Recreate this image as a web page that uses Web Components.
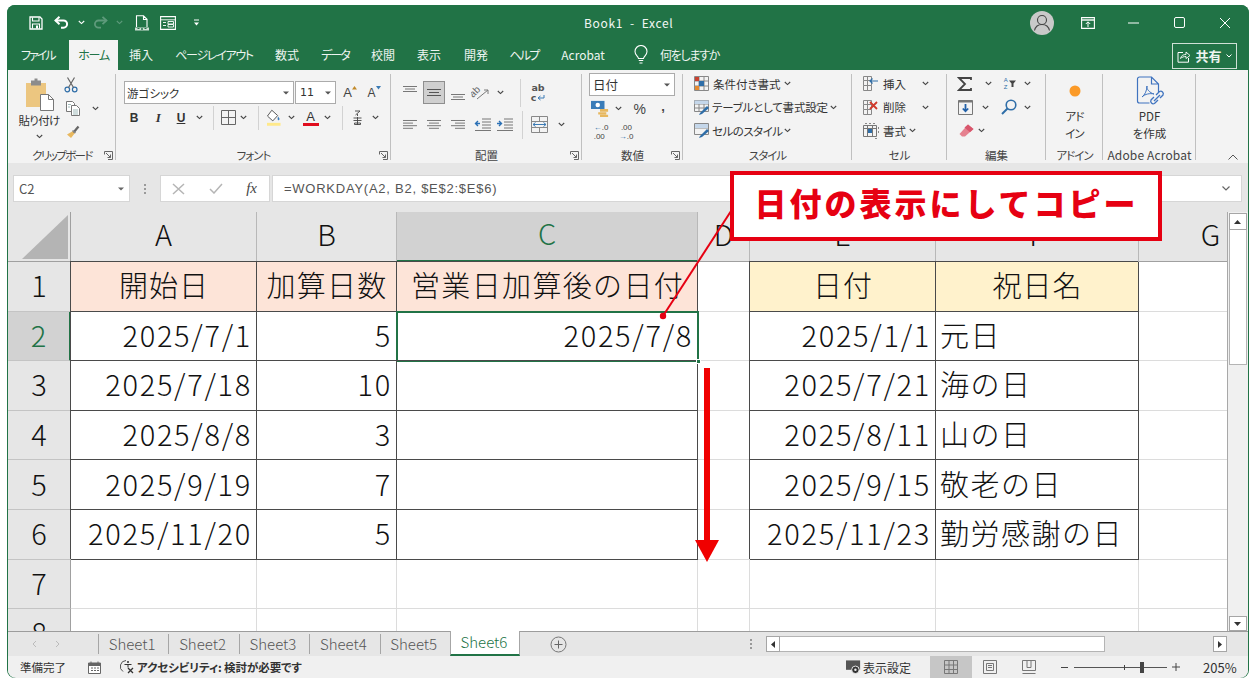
<!DOCTYPE html>
<html lang="ja"><head><meta charset="utf-8"><title>Book1 - Excel</title>
<style>
html,body{margin:0;padding:0;background:#fff;width:1258px;height:687px;overflow:hidden}
</style></head><body>
<x-app></x-app>
<script>
const UI='"Noto Sans CJK JP","Noto Sans",sans-serif';
const svg=(w,h,b,extra='')=>`<svg width="${w}" height="${h}" viewBox="0 0 ${w} ${h}" fill="none" ${extra}>${b}</svg>`;
const chev=(c='#444')=>svg(7,5,`<path d="M.8 1l2.7 2.6L6.2 1" stroke="${c}" stroke-width="1.1"/>`);
const drop=(c='#555')=>svg(6,4,`<path d="M0 .5h6L3 3.5z" fill="${c}"/>`);
const lineset=(ws,c='#666',y0=1,step=3)=>svg(16,y0*2+(ws.length-1)*step+1,ws.map((p,i)=>`<path d="M${p[0]} ${y0+i*step+.5}h${p[1]}" stroke="${c}"/>`).join(''));
const I={
 save:svg(14,14,`<path d="M1 1h10l2 2v10H1z" stroke="#fff" stroke-width="1.3"/><path d="M3.500 1.500v3.500h6.500V1.500M3.500 12.500V8h7v4.500" stroke="#fff" stroke-width="1.1"/><path d="M7 9.500h2v3H7z" fill="#fff"/>`),
 undo:svg(15,13,`<path d="M1.5 4.5h8a3.6 3.6 0 010 7.2H7" stroke="#fff" stroke-width="2"/><path d="M5.5.8L1.5 4.5l4 3.7" stroke="#fff" stroke-width="2"/>`),
 redo:svg(15,13,`<path d="M13.5 4.5h-8a3.6 3.6 0 000 7.2H8" stroke="#5e9a7b" stroke-width="1.8"/><path d="M9.5.8l4 3.7-4 3.7" stroke="#5e9a7b" stroke-width="1.8"/>`),
 prev:svg(14,16,`<path d="M1.5 12V.8h7l3.5 3.5V12M8.500 1v3.500H12" stroke="#fff" stroke-width="1.1"/><path d="M0 12.500h14v3H0z" fill="#cfe0d6"/><circle cx="7" cy="14" r="1" fill="#217346"/><path d="M2.500 13.500h2M9.500 13.500h2" stroke="#217346"/>`),
 form:svg(16,14,`<path d="M.6.6h14.800v12.800H.6z" stroke="#fff" stroke-width="1.1"/><path d="M.6 3.800h14.800M3 6.500h3M3 9.500h3M8 5.500h5.500v2.500H8zM8 8.500h5.500V11H8z" stroke="#fff" stroke-width=".9"/>`),
 qat:svg(7,7,`<path d="M1 1h5" stroke="#fff"/><path d="M1 3.500h5L3.500 6.500z" fill="#fff"/>`),
 bulb:svg(14,20,`<path d="M4.500 13.500C4 11 1 10 1 6.500a6 6 0 0112 0c0 3.500-3 4.500-3.500 7z" stroke="#fff" stroke-width="1.1"/><path d="M4.800 15.500h4.400M5.500 18h3" stroke="#fff" stroke-width="1.2"/>`),
 share:svg(14,13,`<path d="M6 2.500H1v9.700h10.500V8" stroke="#fff"/><path d="M3.500 8.500C4 5.500 6.500 4.500 9 4.500V2l4 3.500L9 8.500V6.500C7 6.500 5 7 3.500 8.500z" stroke="#fff" stroke-width=".9"/>`),
 acct:svg(24,24,`<circle cx="12" cy="12" r="12" fill="#c9c9c9"/><circle cx="12" cy="9" r="4.500" stroke="#444" stroke-width="1.100"/><path d="M4.500 19.500c1-4.500 4-6 7.500-6s6.500 1.500 7.500 6" stroke="#444" stroke-width="1.100"/>`),
 ropt:svg(14,12,`<path d="M.6.6h12.800v10.800H.6z" stroke="#fff" stroke-width="1.100"/><path d="M.6 3h12.800" stroke="#fff" stroke-width="1.400"/><path d="M7 10V5M4.800 7L7 4.800 9.200 7" stroke="#fff"/>`),
 min:svg(12,2,`<path d="M0 1h11" stroke="#fff"/>`),
 max:svg(11,11,`<rect x=".5" y=".5" width="10" height="10" rx="1.500" stroke="#fff"/>`),
 close:svg(12,12,`<path d="M1 1l10 10M11 1L1 11" stroke="#fff" stroke-width="1"/>`),
 paste:svg(29,33,`<path d="M1 5h20v24H1z" fill="#ecc680"/><path d="M6 2.500h10v5H6z" fill="#8c8c8c"/><path d="M9.500 .5h3v3h-3z" fill="#8c8c8c"/><path d="M15.500 16.500h8l5 5v11h-13z" fill="#fff" stroke="#777"/><path d="M23.500 16.500v5h5" stroke="#777"/>`),
 scis:svg(14,16,`<circle cx="3.300" cy="12.500" r="2.300" stroke="#2f6ea8" stroke-width="1.200"/><circle cx="10.700" cy="12.500" r="2.300" stroke="#2f6ea8" stroke-width="1.200"/><path d="M4.500 10.500L10.500.5M9.500 10.500L3.500.5" stroke="#666" stroke-width="1.200"/>`),
 copy:svg(14,15,`<path d="M.5.500h6l2 2v8h-8z" fill="#fff" stroke="#777"/><path d="M5.500 4.500h5l3 3v7h-8z" fill="#fff" stroke="#777"/><path d="M2 3.500h3M2 6h2M7 9h5M7 11h5M7 13h5" stroke="#8aa" stroke-width=".8"/>`),
 brush:svg(15,13,`<path d="M8 6L2 9.500 6 13l4-5z" fill="#e8b85f"/><path d="M8.500 7.500l5-6" stroke="#666" stroke-width="2.200"/><path d="M7.500 5.500l3 2.500" stroke="#888" stroke-width="1.500"/>`),
 border:svg(15,15,`<path d="M.5.500h14v14H.5zM7.500.5v14M.5 7.500h14" stroke="#666"/>`),
 fill:svg(17,17,`<path d="M6 1L1.500 7l5.500 5 5-5.500z" fill="#fff" stroke="#555"/><path d="M12.500 7.500c1.300 1.800 2 2.800 1 3.600s-2.300-.6-1-3.600z" fill="#3c7cb8"/><path d="M1 14h14v3H1z" fill="#ffe98a"/>`),
 phon:svg(11,16,`<path d="M3 1h5L3.500 5M5.500 4v2" stroke="#444" stroke-width=".9"/><path d="M1.500 8h8M1.500 10.500h8M5.500 7v8M2.500 13h6v1.500h-6z" stroke="#444" stroke-width=".9"/>`),
 launch:svg(9,9,`<path d="M.5 3.500V.5h8v8H4" stroke="#666"/><path d="M2 2l4.500 4.500M3.500 6.500h3v-3" stroke="#666"/>`),
 orient:svg(19,15,`<text x="2" y="13" transform="rotate(-45 2 13)" font-family="Liberation Sans" font-size="10" fill="#666">ab</text><path d="M6 14l11-9M17 9V5h-4" stroke="#7a7a7a" stroke-width="1"/>`),
 wrap:`<span class="wrap"><span>ab</span><span class="w2">c<svg width="8" height="6" viewBox="0 0 8 6" fill="none"><path d="M7 0v3H1.500M3.500 1L1 3l2.500 2" stroke="#3a7ab5"/></svg></span></span>`,
 indL:svg(17,13,`<path d="M8 1h9M8 4h9M8 7h9M8 10h9M1 12.500h16" stroke="#777"/><path d="M6 5.500H2M4 3L1.500 5.500 4 8" stroke="#2a70b5" stroke-width="1.400"/>`),
 indR:svg(17,13,`<path d="M8 1h9M8 4h9M8 7h9M8 10h9M1 12.500h16" stroke="#777"/><path d="M1 5.500h4M3 3l2.500 2.500L3 8" stroke="#2a70b5" stroke-width="1.400"/>`),
 merge:svg(17,17,`<path d="M.5.500h16v16H.5zM.5 5.500h16M.5 11.500h16M8.500.5v5M8.500 11.500v5" stroke="#888"/><path d="M2 8.500h13M4.500 6.500l-2.500 2 2.500 2M12.500 6.500l2.500 2-2.500 2" stroke="#3a7ab5" stroke-width="1"/>`),
 curr:svg(20,18,`<path d="M0 0h15v9H0z" fill="#3a7cb8"/><circle cx="7.500" cy="4.500" r="2.500" fill="#fff"/><path d="M10 9h9v3h-9zM8 12.500h9v2.500H8zM10 15.500h9V18h-9z" fill="#e8b85f"/>`),
 dec1:`<span class="dec"><span><b>←</b>.0</span><span>.00</span></span>`,
 dec2:`<span class="dec"><span>&nbsp;.00</span><span><b>→</b>.0</span></span>`,
 cond:svg(15,15,`<path d="M.5.500h14v14H.5zM5 .5v14M10 .5v14M.5 5h14M.5 10h14" stroke="#888"/><path d="M1 1h4v4H1z" fill="#c8412f"/><path d="M5 5h5v5H5z" fill="#2f6ea8"/><path d="M1 10h4v4H1z" fill="#e58a2e"/>`),
 tbl:svg(16,15,`<path d="M.5.500h14v11H.5zM.5 4h14M.5 8h14M5 .5v11M10 .5v11" stroke="#888"/><path d="M.5.500h14V4H.5z" fill="#c5d7ea"/><path d="M6 13l7-7 2 2-7 6-3 1z" fill="#2f6ea8"/>`),
 cstyle:svg(16,15,`<path d="M.5.500h14v11H.5zM.5 5h14" stroke="#888"/><path d="M1 1h13v4H1z" fill="#c5d7ea"/><path d="M6 13l7-7 2 2-7 6-3 1z" fill="#2f6ea8"/>`),
 cins:svg(15,15,`<path d="M.5.500h8v4h-8zM.5 4.500v5h8v-5M.5 9.500v5h8v-5M4.500 .5v14" stroke="#888"/><path d="M15 5H7M9.500 2.500L7 5l2.500 2.500" stroke="#2f6ea8" stroke-width="1.200"/>`),
 cdel:svg(15,15,`<path d="M.5.500h8v4h-8zM.5 4.500v5h8v-5M.5 9.500v5h8v-5M4.500 .5v14" stroke="#888"/><path d="M7 2l7 7M14 2L7 9" stroke="#d0392b" stroke-width="1.800"/>`),
 cfmt:svg(16,16,`<path d="M.5 2.500h13v11H.5zM.5 5.500h13M4.500 2.500v11M9.500 2.500v11" stroke="#777"/><path d="M5 6h4v4H5z" fill="#2f6ea8"/><path d="M2 .5h2M6 .5h2M10 .5h2M15.500 4v2M15.500 8v2M12 15.500h2" stroke="#888"/>`),
 sum:svg(16,14,`<path d="M14 3V1H2l6 6-6 6h12v-2" stroke="#444" stroke-width="1.800"/>`),
 fillb:svg(15,15,`<path d="M.5.500h14v14H.5z" stroke="#777"/><path d="M.5.500h14v2H.5z" fill="#777"/><path d="M7.500 4v7M4.800 8.500l2.700 2.800 2.700-2.800" stroke="#2160a8" stroke-width="1.800"/>`),
 find:svg(16,16,`<circle cx="10" cy="6" r="4.800" stroke="#2f6ea8" stroke-width="1.600"/><path d="M6.500 9.500L1 15" stroke="#2f6ea8" stroke-width="2"/>`),
 erase:svg(15,13,`<path d="M9 .5l5.500 4.500L6 12.500H3L.5 10z" fill="#e5818f"/><path d="M9 .5l5.500 4.500-3.500 3.200L5.500 3.500z" fill="#d8566c"/>`),
 dot:svg(12,12,`<circle cx="6" cy="6" r="5.500" fill="#fb9a28"/>`),
 pdf:svg(30,32,`<path d="M2.500 3a2 2 0 012-2h12l7 7v8M16.500 1v7h7M2.500 3v22a2 2 0 002 2h10" stroke="#3f73bf" stroke-width="1.200"/><path d="M7 21c3-2 5-7 5-11-1 3 3 7 7 8-4-1-9 0-12 3z" stroke="#3f73bf" stroke-width="1"/><path d="M21 19l3.500-3.500a2.600 2.600 0 013.500 3.500L25 22M23 24l-3.500 3.500a2.600 2.600 0 01-3.500-3.500l3-3M19 25l6-6" stroke="#3f73bf" stroke-width="1.300"/>`),
 collapse:svg(10,6,`<path d="M.5 5.500L5 1l4.500 4.500" stroke="#555"/>`),
};
function row(left,items,cls=''){
  const c=items.map(i=>i[0]);const b=[];
  for(let i=0;i<c.length-1;i++)b.push((c[i]+c[i+1])/2);
  const st=c[0]-(b[0]-c[0]);const en=c[c.length-1]+(c[c.length-1]-b[b.length-1]);
  const edges=[st,...b,en];
  return `<div class="row ${cls}" style="padding-left:${st-left}px">`+items.map((it,i)=>`<span class="c" style="width:${edges[i+1]-edges[i]}px">${it[1]}</span>`).join('')+`</div>`;
}
function base(el,html){el.attachShadow({mode:'open'}).innerHTML=html;}

class XRGroup extends HTMLElement{
 connectedCallback(){ if(this.shadowRoot)return;
  const w=this.getAttribute('w'),lab=this.getAttribute('label'),l=this.hasAttribute('launch'),pr=this.getAttribute('lpad')||'3',ls=this.getAttribute('ls')||'0',fs=this.getAttribute('fs')||'11.5';
  base(this,`<style>
  :host{display:flex;flex-direction:column;box-sizing:border-box;width:${w}px;height:93px;position:relative}
  .body{height:78px;box-sizing:border-box;flex:none}
  .lab{flex:1;display:grid;grid-template-columns:1fr auto 1fr;align-items:center;font-size:${fs}px;color:#444;line-height:14px;padding-bottom:1px;white-space:nowrap}
  .lab b{font-weight:400;grid-column:2;letter-spacing:${ls}px}
  .lab i{grid-column:3;justify-self:end;padding-right:${pr}px;display:flex}
  .sep{position:absolute;right:0;top:4px;height:86px;width:1px;background:#c0c0c0}
  </style><div class="body"><slot></slot></div><div class="lab"><b>${lab}</b>${l?`<i>${I.launch}</i>`:''}</div><div class="sep"></div>`);
 }
}
customElements.define('x-rgroup',XRGroup);

class XTitlebar extends HTMLElement{
 connectedCallback(){base(this,`<style>
  :host{display:block;height:35px;background:#217346;color:#fff;border-radius:8px 8px 0 0}
  .bar{display:flex;align-items:center;height:35px;position:relative}
  .c{display:flex;justify-content:center;align-items:center;flex:none;height:24px}
  .row{display:flex;align-items:center}
  .title{position:absolute;left:577px;top:11px;font:12px/14px ${UI};letter-spacing:.7px;white-space:pre;color:#f2f7f4}
  .right{margin-left:auto;display:flex;align-items:center;padding-right:18px}
  .right span{flex:none;display:flex;justify-content:center;align-items:center}
  </style><div class="bar">
  ${row(7,[[36,I.save],[65,I.undo],[80,chev('#fff')],[102,I.redo],[118,chev('#5e9a7b')],[141,I.prev],[168,I.form],[196,I.qat]])}
  <div class="title">Book1  -  Excel</div>
  <div class="right"><span style="width:24px;margin-right:26px">${I.acct}</span><span style="width:16px;margin-right:32px">${I.ropt}</span><span style="width:12px;margin-right:33px">${I.min}</span><span style="width:12px;margin-right:34px">${I.max}</span><span style="width:12px">${I.close}</span></div>
  </div>`);}
}
customElements.define('x-titlebar',XTitlebar);

class XTabstrip extends HTMLElement{
 connectedCallback(){
  const tabs=[['ファイル',13,33,0,-2],['ホーム',16,49,1,-1.2],['挿入',11,24],['ページレイアウト',22,78,0,-1.3],['数式',22,24],['データ',22,28,0,-2],['校閲',22,24],['表示',22,24],['開発',23,24],['ヘルプ',21,30,0,-1.7],['Acrobat',21,46]];
  base(this,`<style>
  :host{display:flex;height:30px;background:#217346;font:12px/30px ${UI};font-feature-settings:"palt";color:#eef5f1;align-items:stretch}
  span{flex:none;white-space:nowrap;text-align:center}
  .on{background:#f3f3f3;color:#217346}
  .bulb{margin-left:27px;width:16px;display:flex;align-items:center;justify-content:center}
  .tell{margin-left:11px;letter-spacing:-1.300px}
  .share{margin-left:auto;margin-right:11px;margin-top:3px;height:24px;width:63px;border:1px solid #cfe0d6;display:flex;align-items:center;justify-content:center;gap:4px;line-height:22px;font-size:13px;font-weight:700;box-sizing:content-box}
  .share svg{flex:none}
  </style>`+tabs.map(t=>`<span class="${t[3]?'on':''}" style="margin-left:${t[1]-(t[3]?1:0)}px;width:${t[2]}px;letter-spacing:${t[4]||0}px">${t[0]}</span>`).join('')+
  `<span class="bulb">${I.bulb}</span><span class="tell">何をしますか</span><span class="share">${I.share}<span>共有</span>${svg(6,4,'<path d="M.5.5L3 3l2.500-2.500" stroke="#fff"/>')}</span>`);
 }
}
customElements.define('x-tabstrip',XTabstrip);

const caret=(c,up)=>svg(5,4,up?`<path d="M2.500 0L5 3.500H0z" fill="${c}"/>`:`<path d="M0 0h5L2.500 3.500z" fill="${c}"/>`);
class XRibbon extends HTMLElement{
 connectedCallback(){
  const tl=(icon,txt,ch,gap=3,ls=0)=>`<div class="tl"><span class="ic">${icon}</span><span style="margin-left:${gap}px;letter-spacing:${ls}px">${txt}</span>${ch?`<span class="ch" style="margin-left:${ch}px">${chev()}</span>`:''}</div>`;
  base(this,`<style>
  :host{display:flex;height:93px;background:#f3f3f3;font:11.500px/14px ${UI};font-feature-settings:"palt";color:#333;border-bottom:0}
  .row{display:flex;align-items:center;height:23.500px;box-sizing:border-box}
  .c{flex:none;display:flex;align-items:center;justify-content:center;white-space:nowrap;height:100%}
  .two{padding-top:10px}
  .two .row{height:25px}
  .two .row+.row{margin-top:7px}
  .sel{height:23px;box-sizing:border-box;background:#fff;border:1px solid #ababab;display:flex;align-items:center;justify-content:space-between;padding:0 4px 0 2px;font-size:11.500px}
  .clip{display:flex;height:78px}
  .pbtn{width:46px;margin-left:8px;display:flex;flex-direction:column;align-items:center;padding-top:8px;box-sizing:border-box}
  .pbtn .t{font-size:11.500px;line-height:14px;margin-top:2px;white-space:nowrap;letter-spacing:-.7px}
  .pbtn .d{margin-top:7px;display:flex}
  .cstack{display:flex;flex-direction:column;padding-top:3px;width:40px}
  .cstack div{display:flex;align-items:center;height:23.500px;padding-left:2px}
  .aa{font:13px/14px "Liberation Sans",sans-serif;color:#444;display:inline-flex;justify-content:center;align-items:flex-start;width:20px}
  .fb{font:700 12px/14px "Liberation Sans",sans-serif;color:#333}
  .wrap{font:700 9.500px/10px "DejaVu Sans",sans-serif;color:#555;text-align:center;display:inline-flex;flex-direction:column;height:20px}
  .w2{display:flex;align-items:center;gap:1px}
  .dec{font:8px/9px "Liberation Sans",sans-serif;color:#444;display:inline-flex;flex-direction:column;white-space:pre}
  .dec b{color:#2f6ea8;font-weight:700}
  .act{width:22px;height:23px;background:#cfcfcf;border:1px solid #8e8e8e;box-sizing:border-box;display:flex;align-items:center;justify-content:center}
  .vs{width:1px;height:24px;background:#d2d2d2;display:block}
  .tl{display:flex;align-items:center;height:23.500px;white-space:nowrap}
  .tl .ic{width:17px;display:flex;justify-content:center;flex:none}
  .ch{display:flex}
  .big{display:flex;flex-direction:column;align-items:center;text-align:center;font-size:11.500px;line-height:17px}
  .big .ic{display:flex;align-items:center;justify-content:center}
  .fill{flex:1;position:relative;display:flex;justify-content:flex-end;align-items:flex-end;padding:0 10px 3px 0}
  .pct{font:14px "Liberation Sans",sans-serif;color:#444}
  .cm{font:700 13px "Liberation Sans",sans-serif;color:#444;line-height:10px;padding-bottom:4px}
  .up{display:flex;margin-top:-8px}.dn{display:flex;margin-top:8px}
  </style>
  <x-rgroup w="108" label="クリップボード" launch ls="-1.600"><div class="clip">
    <div class="pbtn">${I.paste}<span class="t">貼り付け</span><span class="d">${chev()}</span></div>
    <div class="cstack"><div>${I.scis}</div><div style="padding-left:4px">${I.copy}<span style="margin-left:12px;display:flex">${chev()}</span></div><div style="padding-left:3px">${I.brush}</div></div>
  </div></x-rgroup>
  <x-rgroup w="275" label="フォント" launch ls="-1"><div class="two">
    <div style="display:flex;height:25px;align-items:center;padding-left:8px">
      <div class="sel" style="width:170px"><span>游ゴシック</span>${drop()}</div>
      <div class="sel" style="width:41px;margin-left:1px;padding-left:4px"><span style="font-family:'DejaVu Sans';font-size:11px">11</span>${drop()}</div>
      <span class="aa" style="margin-left:4px">A${caret('#c28a2a',true)}</span><span class="aa" style="margin-left:4px;font-size:12px">A${caret('#3a7ab5',false)}</span>
    </div>
    ${row(116,[[134,'<span class="fb">B</span>'],[158,'<span class="fb" style="font-style:italic;font-family:Liberation Serif;font-size:13px">I</span>'],[183,'<span class="fb" style="text-decoration:underline">U</span>'],[200,chev()],[213,'<i class="vs"></i>'],[227,I.border],[245,chev()],[258,'<i class="vs"></i>'],[273,I.fill],[291,chev()],[311,'<span style="display:inline-block;font:13px/13px Liberation Sans;border-bottom:3px solid #e00d1e;padding:0 1px;width:14px;text-align:center;color:#333">A</span>'],[329,chev()],[342,'<i class="vs"></i>'],[357,I.phon],[375,chev()]])}
  </div></x-rgroup>
  <x-rgroup w="191" label="配置" launch><div class="two">
    ${row(391,[[410,`<span class="up">${lineset([[1,14],[3,10],[1,14]],'#777',1,2.500)}</span>`],[434,`<span class="act">${lineset([[1,14],[3,10],[1,14]],'#555',1,3)}</span>`],[458,`<span class="dn">${lineset([[1,14],[3,10],[1,14]],'#777',1,2.500)}</span>`],[483,I.orient],[498,chev()],[522,'<i class="vs" style="height:28px"></i>'],[538,I.wrap]])}
    ${row(391,[[410,lineset([[1,14],[1,10],[1,14],[1,10]],'#777',1,2.600)],[434,lineset([[1,14],[3,10],[1,14],[3,10]],'#777',1,2.600)],[458,lineset([[1,14],[5,10],[1,14],[5,10]],'#777',1,2.600)],[483,I.indL],[507,I.indR],[522,'<i class="vs" style="height:28px"></i>'],[538,I.merge],[561,chev()]])}
  </div></x-rgroup>
  <x-rgroup w="101" label="数値" launch><div style="padding-top:3px">
    <div style="height:24px;padding-left:7px"><div class="sel" style="width:86px;padding-left:3px;font-size:12.500px"><span>日付</span>${drop()}</div></div>
    ${row(582,[[600,I.curr],[618,chev()],[639,'<span class="pct">%</span>'],[663,'<span class="cm">,</span>']])}
    ${row(582,[[601,I.dec1],[626,I.dec2]])}
  </div></x-rgroup>
  <x-rgroup w="169" label="スタイル" ls="-1"><div style="padding:2px 0 0 10px">
    ${tl(I.cond,'条件付き書式',3)}${tl(I.tbl,'テーブルとして書式設定',2,2,-.2)}${tl(I.cstyle,'セルのスタイル',1,2,-.5)}
  </div></x-rgroup>
  <x-rgroup w="95" label="セル"><div style="padding:2px 0 0 10px">
    ${tl(I.cins,'挿入',16,4)}${tl(I.cdel,'削除',16,4)}${tl(I.cfmt,'書式',3,4)}
  </div></x-rgroup>
  <x-rgroup w="99" label="編集"><div style="padding-top:2px">
    ${row(947,[[965,I.sum],[988,chev()],[1012,`<span style="display:flex;align-items:center;gap:1px"><span style="font:6px/7px Liberation Sans;color:#2f6ea8;display:flex;flex-direction:column"><span>A</span><span>Z</span></span>${svg(7,7,'<path d="M0 .5h7L4.500 3.500V7H2.500V3.500z" fill="#444"/>')}</span>`],[1027,chev()]])}
    ${row(947,[[965,I.fillb],[981,chev()],[1013,I.find],[1027,chev()]])}
    ${row(947,[[966,I.erase],[981,chev()]])}
  </div></x-rgroup>
  <x-rgroup w="57" label="アドイン" ls="-1"><div class="big"><span class="ic" style="height:38px;padding-top:4px;box-sizing:border-box">${I.dot}</span><span style="letter-spacing:-.8px">アド<br>イン</span></div></x-rgroup>
  <x-rgroup w="93" label="Adobe Acrobat" fs="12" ls=".15"><div class="big" style="padding-top:6px"><span class="ic" style="height:32px">${I.pdf}</span><span>PDF<br>を作成</span></div></x-rgroup>
  <div class="fill">${I.collapse}</div>`);
 }
}
customElements.define('x-ribbon',XRibbon);

class XFormula extends HTMLElement{
 connectedCallback(){base(this,`<style>
  :host{display:flex;height:49px;background:#e6e6e6;box-sizing:border-box;padding:12px 6px 10px 5px;font:13px/27px "Liberation Sans",sans-serif;color:#555;align-items:stretch}
  .b{background:#fff;border:1px solid #d6d6d6;box-sizing:border-box;display:flex;align-items:center}
  .name{width:117px;padding:0 5px;justify-content:space-between;font-family:${UI};font-size:13px}
  .grip{width:30px;display:flex;flex-direction:column;justify-content:center;align-items:center;gap:2px}
  .grip i{width:2px;height:2px;background:#9a9a9a}
  .fx{width:110px;justify-content:space-between;padding:0 12px 0 11px}
  .fi{font:italic 400 15px "Liberation Serif",serif;color:#444}
  .in{flex:1;margin-left:2px;padding:0 11px;letter-spacing:.75px;justify-content:space-between}
  </style><div class="b name"><span>C2</span>${drop('#666')}</div><div class="grip"><i></i><i></i><i></i></div>
  <div class="b fx">${svg(13,12,'<path d="M1 1l11 10M12 1L1 11" stroke="#b5b5b5" stroke-width="1.500"/>')}${svg(14,11,'<path d="M1 6l4 4L13 1" stroke="#b5b5b5" stroke-width="1.500"/>')}<span class="fi">fx</span></div>
  <div class="b in"><span>=WORKDAY(A2, B2, $E$2:$E$6)</span>${svg(8,5,'<path d="M.5.500L4 4 7.500.5" stroke="#666" stroke-width="1.200"/>')}</div>`);}
}
customElements.define('x-formula',XFormula);

class XSheet extends HTMLElement{
 connectedCallback(){
  const cols=['A','B','C','D','E','F','G'];
  const data={
   1:[['開始日','hp c'],['加算日数','hp c b'],['営業日加算後の日付','hp c ov'],null,['日付','hy c'],['祝日名','hy c']],
   2:[['2025/7/1','t r'],['5','t r'],['2025/7/8','t r sel'],null,['2025/1/1','t r'],['元日','t l']],
   3:[['2025/7/18','t r'],['10','t r'],['','t'],null,['2025/7/21','t r'],['海の日','t l']],
   4:[['2025/8/8','t r'],['3','t r'],['','t'],null,['2025/8/11','t r'],['山の日','t l']],
   5:[['2025/9/19','t r'],['7','t r'],['','t'],null,['2025/9/15','t r'],['敬老の日','t l']],
   6:[['2025/11/20','t r'],['5','t r'],['','t'],null,['2025/11/23','t r'],['勤労感謝の日','t l']],
   7:[],8:[]
  };
  let h=`<div class="corner"><svg width="46" height="44" viewBox="0 0 46 44"><path d="M46 0v44H0z" fill="#b4b4b4"/></svg></div>`;
  cols.forEach(c=>h+=`<div class="ch ${c=='C'?'on':''}">${c}</div>`);
  for(let r=1;r<=8;r++){
    h+=`<div class="rh ${r==2?'on':''}">${r}</div>`;
    for(let i=0;i<7;i++){const d=data[r][i];
      h+=d?`<div class="cell ${d[1]}"><span>${d[0]}</span></div>`:`<div class="cell"></div>`;}
  }
  base(this,`<style>
  :host{display:flex;height:419px;background:#fff;font:400 29px/1 "Noto Sans CJK JP",sans-serif;color:#111;overflow:hidden}
  .grid{flex:none;width:1220px;display:grid;grid-template-columns:63px 186px 140px 301px 52px 186px 203px 144px;grid-template-rows:50px repeat(8,49.600px);overflow:hidden;border-right:1px solid #a8a8a8;box-sizing:border-box}
  .corner{background:#e6e6e6;display:flex;justify-content:flex-end;align-items:flex-end;padding:0 2px 2px 0;border-right:1px solid #a0a0a0;border-bottom:1px solid #a0a0a0;box-sizing:border-box}
  .ch,.rh{background:#e6e6e6;display:flex;align-items:center;justify-content:center;box-sizing:border-box;font-weight:300}
  .ch{border-right:1px solid #b8b8b8;border-bottom:1px solid #a0a0a0;padding-bottom:7px}
  .rh{border-right:1px solid #a0a0a0;border-bottom:1px solid #c4c4c4;padding-bottom:3px}
  .ch.on{background:#d2d2d2;color:#217346;border-bottom:2px solid #217346}
  .rh.on{background:#d2d2d2;color:#217346;border-right:2px solid #217346}
  .cell{box-sizing:border-box;border-right:1px solid #dcdcdc;border-bottom:1px solid #dcdcdc;display:flex;align-items:center;white-space:nowrap;position:relative;font-weight:300;min-width:0;padding-bottom:4px}
  .cell span{display:block;letter-spacing:1.700px}
  .c{justify-content:center}
  .c span{letter-spacing:1px}
  .b span{letter-spacing:1.300px}
  .l span{letter-spacing:1.500px}
  .r{justify-content:flex-end;padding-right:5px}
  .l{padding-left:4px}
  .t,.hp,.hy{border:0;box-shadow:inset -1px -1px 0 #4a4a4a,-1px -1px 0 #4a4a4a}
  .hp{background:#fde4d8}.hy{background:#fff2cc}
  .ov{justify-content:flex-start;padding-left:14px;overflow:visible}
  .ov span{letter-spacing:1.350px}
  .sel::after{content:"";position:absolute;left:-1px;top:-1px;right:-1px;bottom:-1px;border:2px solid #217346;box-sizing:border-box;pointer-events:none}
  .sel::before{content:"";position:absolute;right:-3px;bottom:-3px;width:5px;height:5px;background:#217346;border:1px solid #fff;z-index:1;box-sizing:border-box}
  .sb{flex:1;background:#f0f0f0;display:flex;flex-direction:column;align-items:center;padding:1px 1px 0 0;box-sizing:border-box}
  .btn{width:18px;height:17px;background:#fff;border:1px solid #a6a6a6;box-sizing:border-box;display:flex;align-items:center;justify-content:center;flex:none}
  .thumb{width:18px;height:135px;background:#fff;border:1px solid #b4b4b4;border-top:0;box-sizing:border-box;flex:none}
  .sp{flex:1}
  </style><div class="grid">${h}</div>
  <div class="sb"><div class="btn">${svg(7,4,'<path d="M3.500 0L7 4H0z" fill="#333"/>')}</div><div class="thumb"></div><div class="sp"></div><div class="btn" style="height:15px">${svg(7,4,'<path d="M0 0h7L3.500 4z" fill="#333"/>')}</div></div>`);
 }
}
customElements.define('x-sheet',XSheet);

class XSheetTabs extends HTMLElement{
 connectedCallback(){
  const names=['Sheet1','Sheet2','Sheet3','Sheet4','Sheet5'];
  base(this,`<style>
  :host{display:flex;height:25px;background:#e6e6e6;border-top:1px solid #9c9c9c;box-sizing:border-box;font:15px/24px "Noto Sans CJK JP",sans-serif;color:#555;align-items:stretch;font-weight:300}
  .nav{width:90px;display:flex;align-items:center;padding-left:24px;gap:18px;box-sizing:border-box;color:#bbb}
  .t{width:70.400px;box-sizing:border-box;border-left:1px solid #a6a6a6;margin:2px 0;padding-right:3px;line-height:19px;text-align:center;flex:none}
  .a{width:70px;background:#fff;color:#217346;border-left:1px solid #a6a6a6;border-right:1px solid #a6a6a6;border-bottom:2px solid #217346;box-sizing:border-box;padding-right:2px;text-align:center;line-height:22px;margin-top:-1px;flex:none}
  .plus{margin-left:30px;width:18px;display:flex;align-items:center}
  .dots{margin-left:173px;width:20px;display:flex;flex-direction:column;justify-content:center;align-items:center;gap:2px;margin-right:5px}
  .dots i{width:2px;height:2px;background:#999}
  .h{display:flex;align-items:center}
  .hb{width:14px;height:16px;background:#fff;border:1px solid #a6a6a6;box-sizing:border-box;display:flex;align-items:center;justify-content:center;flex:none}
  .ht{width:325px;height:16px;background:#fff;border:1px solid #b4b4b4;border-left:0;box-sizing:border-box}
  .hg{width:108px}
  </style><div class="nav">${svg(5,8,'<path d="M4 1L1 4l3 3" stroke="#bbb"/>')}${svg(5,8,'<path d="M1 1l3 3-3 3" stroke="#bbb"/>')}</div>
  ${names.map(n=>`<div class="t">${n}</div>`).join('')}<div class="a">Sheet6</div>
  <div class="plus">${svg(17,17,'<circle cx="8.500" cy="8.500" r="7.500" stroke="#777"/><path d="M8.500 4.500v8M4.500 8.500h8" stroke="#666"/>')}</div>
  <div class="dots"><i></i><i></i><i></i></div>
  <div class="h"><div class="hb">${svg(4,7,'<path d="M4 0v7L0 3.500z" fill="#333"/>')}</div><div class="ht"></div><div class="hg"></div><div class="hb">${svg(4,7,'<path d="M0 0v7l4-3.500z" fill="#333"/>')}</div></div>`);
 }
}
customElements.define('x-sheettabs',XSheetTabs);

class XStatus extends HTMLElement{
 connectedCallback(){base(this,`<style>
  :host{display:flex;height:22px;background:#f0f0f0;font:11.500px/21px ${UI};font-feature-settings:"palt";color:#333;align-items:stretch;border-radius:0 0 8px 8px}
  span{flex:none;white-space:nowrap;display:flex;align-items:center}
  .vw{width:42px;justify-content:center}
  .slider{width:93px;height:1px;background:#555;position:relative;align-self:center}
  .slider i{position:absolute;background:#444}
  </style>
  <span style="margin-left:12px;width:48px">準備完了</span>
  <span style="margin-left:20px;width:14px">${svg(13,13,'<path d="M.5 2h12v10.500H.5z" fill="#fff" stroke="#666"/><path d="M.5 2h12v3H.5z" fill="#666"/><path d="M3 .5v2M10 .5v2" stroke="#666"/><path d="M3 7h2M6 7h2M9 7h2M3 9.500h2M6 9.500h2M9 9.500h2" stroke="#666"/>')}</span>
  <span style="margin-left:17px;width:17px">${svg(17,16,'<path d="M7 1.500a6 6 0 00-3 11" stroke="#555"/><circle cx="9" cy="3" r="1" fill="#333"/><path d="M5.500 5.500h7M9 5.500v3" stroke="#333"/><path d="M9 9l5 5M14 9l-5 5" stroke="#333" stroke-width="1.300"/>')}</span>
  <span style="margin-left:1px;font-weight:700;letter-spacing:-.1px;width:165px">アクセシビリティ: 検討が必要です</span>
  <span style="margin-left:544px;width:16px">${svg(17,16,'<path d="M0 1h15v10H0z" fill="#555"/><circle cx="10" cy="11" r="4" fill="#333" stroke="#f0f0f0"/><circle cx="10" cy="11" r="1.300" fill="#f0f0f0"/>')}</span>
  <span style="margin-left:1px;width:67px;font-size:12px">表示設定</span>
  <span class="vw" style="background:#c6c6c6">${svg(14,14,'<path d="M.5.500h13v13H.5zM.5 5h13M.5 9.500h13M5 .5v13M9.500 .5v13" stroke="#777"/>')}</span>
  <span class="vw" style="margin-left:-3px">${svg(14,14,'<path d="M.5.500h13v13H.5zM3.500 3.500h7v7h-7z" stroke="#777"/><path d="M5 5.500h4M5 7.500h4" stroke="#777"/>')}</span>
  <span class="vw" style="margin-left:-3px">${svg(14,14,'<path d="M.5.500h13v10H.5zM5 .5v7h4v-7M.5 13.500h13" stroke="#777"/>')}</span>
  <span style="margin-left:9px;width:10px;justify-content:center">${svg(7,1,'<path d="M0 .5h7" stroke="#444"/>')}</span>
  <span class="slider" style="margin-left:5px"><i style="left:50px;top:-2px;width:1px;height:5px"></i><i style="left:66px;top:-5px;width:4px;height:11px"></i></span>
  <span style="margin-left:4px;width:10px;justify-content:center">${svg(8,8,'<path d="M0 4h8M4 0v8" stroke="#444"/>')}</span>
  <span style="margin-left:22px;font-size:13px">205%</span>
  `);}
}
customElements.define('x-status',XStatus);

class XCallout extends HTMLElement{
 connectedCallback(){base(this,`<style>
  :host{position:absolute;left:723px;top:166px;width:432px;height:70px;box-sizing:border-box;border:4px solid #e60012;background:#fff;display:flex;align-items:center;justify-content:center;padding:0 0 8px 1px;font:900 32px/1 "Noto Sans CJK JP",sans-serif;color:#e60012;letter-spacing:3px;white-space:nowrap}
  </style><slot></slot>`);}
}
customElements.define('x-callout',XCallout);

class XAnnot extends HTMLElement{
 connectedCallback(){base(this,`<style>:host{position:absolute;left:0;top:0;width:1242px;height:673px;pointer-events:none}svg{display:block}</style>
 <svg width="1242" height="673" viewBox="0 0 1242 673"><path d="M726 203L656 311" stroke="#e60012" stroke-width="2"/><circle cx="656" cy="311" r="3.200" fill="#e60012"/><path d="M700 363v172" stroke="#f00000" stroke-width="6"/><path d="M688 535h24l-12 22z" fill="#f00000"/></svg>`);}
}
customElements.define('x-annot',XAnnot);

class XApp extends HTMLElement{
 connectedCallback(){base(this,`<style>
  :host{display:flex;flex-direction:column;position:relative;box-sizing:content-box;width:1242px;height:673px;margin:5px 0 0 7px;border-radius:8px;box-shadow:inset 0 0 0 1px #217346;font-family:${UI}}
  .in{display:flex;flex-direction:column;margin:0 1px;flex:1}
  </style><x-titlebar></x-titlebar><div class="in"><x-tabstrip></x-tabstrip><x-ribbon></x-ribbon><x-formula></x-formula><x-sheet></x-sheet><x-sheettabs></x-sheettabs><x-status></x-status></div>
  <x-annot></x-annot><x-callout>日付の表示にしてコピー</x-callout>`);}
}
customElements.define('x-app',XApp);
</script>
</body></html>
